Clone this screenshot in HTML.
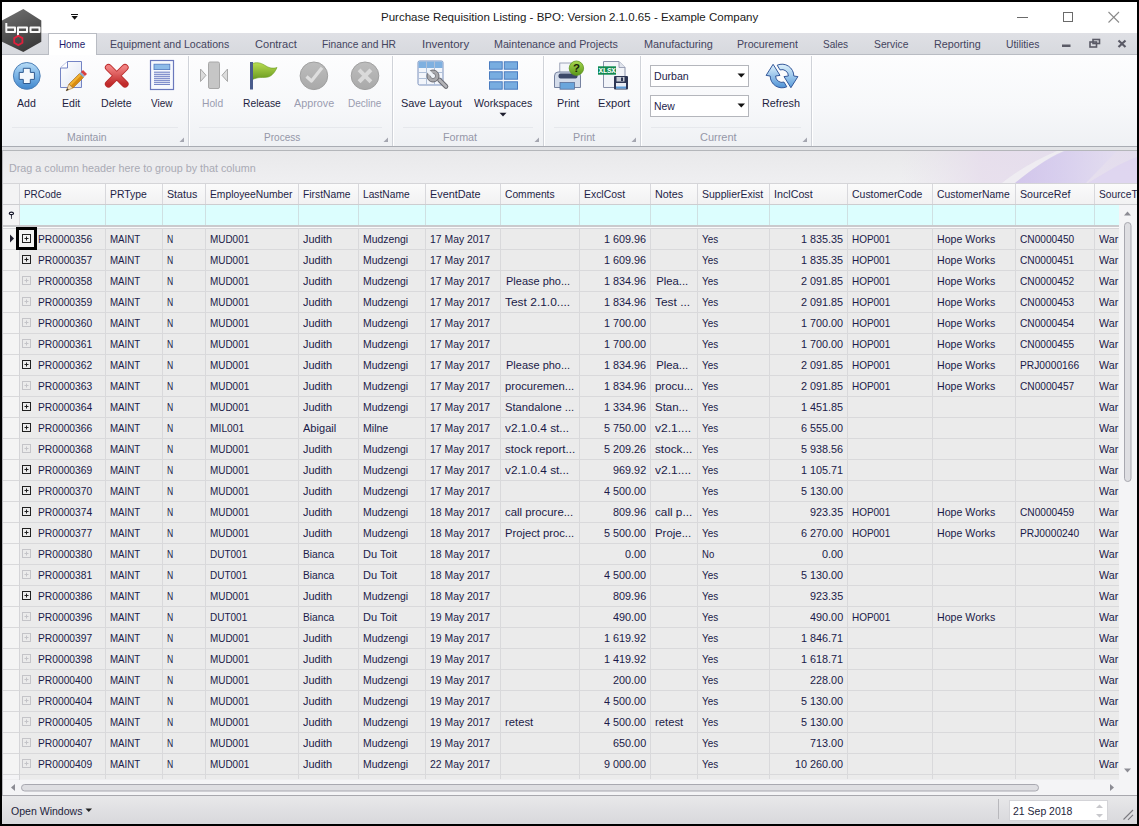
<!DOCTYPE html><html><head><meta charset="utf-8"><style>
*{margin:0;padding:0;box-sizing:border-box}
html,body{width:1139px;height:826px;overflow:hidden;background:#000}
body{position:relative;font-family:"Liberation Sans",sans-serif;}
.a{position:absolute}
.t{position:absolute;white-space:pre;transform-origin:0 0}
svg{position:absolute}
</style></head><body>
<div class="a" style="left:2px;top:2px;width:1135px;height:822px;background:#fff;"></div><div class="t" style="left:381.40px;top:12.32px;font-size:11.2px;line-height:11.2px;color:#1a1a1a;transform:scaleX(1.0301);">Purchase Requisition Listing - BPO: Version 2.1.0.65 - Example Company</div><svg style="left:1000px;top:2px" width="137" height="31">
<line x1="17" y1="15.5" x2="28" y2="15.5" stroke="#6a6a6a" stroke-width="1"/>
<rect x="63.5" y="10.5" width="9" height="9" fill="none" stroke="#6a6a6a" stroke-width="1"/>
<line x1="108.5" y1="10" x2="119" y2="20.5" stroke="#8a8a8a" stroke-width="1.1"/>
<line x1="119" y1="10" x2="108.5" y2="20.5" stroke="#8a8a8a" stroke-width="1.1"/>
</svg><svg style="left:68px;top:10px" width="14" height="12">
<rect x="3" y="4" width="7" height="1" fill="#111"/>
<path d="M3.5 6 L9.8 6 L6.65 9.8 Z" fill="#111"/>
</svg><div class="a" style="left:2px;top:33px;width:1135px;height:21px;background:linear-gradient(#dfe0e5,#d7d9de);"></div><div class="a" style="left:2px;top:54px;width:1135px;height:1px;background:#b9bcc3;"></div><div class="a" style="left:48px;top:33px;width:49px;height:22px;background:#fff;border:1px solid #b9bcc3;border-bottom:none"></div><div class="t" style="left:58.60px;top:39.39px;font-size:11px;line-height:11px;color:#1c1c6a;transform:scaleX(0.8963);">Home</div><div class="t" style="left:110.20px;top:39.39px;font-size:11px;line-height:11px;color:#44445e;transform:scaleX(0.9602);">Equipment and Locations</div><div class="t" style="left:254.50px;top:39.39px;font-size:11px;line-height:11px;color:#44445e;transform:scaleX(1.0050);">Contract</div><div class="t" style="left:321.60px;top:39.39px;font-size:11px;line-height:11px;color:#44445e;transform:scaleX(0.9305);">Finance and HR</div><div class="t" style="left:421.90px;top:39.39px;font-size:11px;line-height:11px;color:#44445e;transform:scaleX(1.0424);">Inventory</div><div class="t" style="left:494.40px;top:39.39px;font-size:11px;line-height:11px;color:#44445e;transform:scaleX(0.9734);">Maintenance and Projects</div><div class="t" style="left:643.60px;top:39.39px;font-size:11px;line-height:11px;color:#44445e;transform:scaleX(0.9878);">Manufacturing</div><div class="t" style="left:737.40px;top:39.39px;font-size:11px;line-height:11px;color:#44445e;transform:scaleX(0.9667);">Procurement</div><div class="t" style="left:823.40px;top:39.39px;font-size:11px;line-height:11px;color:#44445e;transform:scaleX(0.9117);">Sales</div><div class="t" style="left:873.80px;top:39.39px;font-size:11px;line-height:11px;color:#44445e;transform:scaleX(0.9376);">Service</div><div class="t" style="left:933.50px;top:39.39px;font-size:11px;line-height:11px;color:#44445e;transform:scaleX(0.9787);">Reporting</div><div class="t" style="left:1005.70px;top:39.39px;font-size:11px;line-height:11px;color:#44445e;transform:scaleX(0.9397);">Utilities</div><svg style="left:1055px;top:35px" width="80" height="18">
<rect x="7" y="9.5" width="8.5" height="2.5" fill="#5a5a66"/>
<rect x="35" y="7" width="6.5" height="5" fill="none" stroke="#5a5a66" stroke-width="1.6"/>
<rect x="38" y="4.5" width="6.5" height="4" fill="none" stroke="#5a5a66" stroke-width="1.6"/>
<path d="M63.5 5.5 L70.5 12 M70.5 5.5 L63.5 12" stroke="#5a5a66" stroke-width="2.2"/>
</svg><svg style="left:0;top:0" width="48" height="56">
<defs><linearGradient id="gHex" x1="0.2" y1="0" x2="0.6" y2="1"><stop offset="0" stop-color="#6e6e6e"/><stop offset="0.45" stop-color="#565656"/><stop offset="1" stop-color="#3a3a3a"/></linearGradient></defs>
<path d="M23.3 9 L41.3 20.4 L41.3 41.8 L23.3 51.9 L2 41.8 L2 20.4 Z" fill="url(#gHex)"/>
<g fill="none" stroke="#fafafa" stroke-width="2" stroke-linejoin="round">
<path d="M6.3 23 V32 H15 V27.5 H6.3"/>
<path d="M18 36 V27.5 H27 V32 H18"/>
<rect x="30.5" y="27.5" width="9" height="4.5"/>
</g>
<path d="M18.3 35.8 L22.4 38.1 L22.4 42.8 L18.3 45.1 L14.2 42.8 L14.2 38.1 Z" fill="none" stroke="#e0203c" stroke-width="1.8"/>
</svg><div class="a" style="left:2px;top:55px;width:1135px;height:91px;background:linear-gradient(#fdfdfe 0%,#f7f8fa 55%,#eff1f4 100%);"></div><div class="a" style="left:2px;top:146px;width:1135px;height:1px;background:#a9acb3;"></div><div class="a" style="left:188px;top:56px;width:1px;height:90px;background:#d0d3d9;"></div><div class="a" style="left:189px;top:56px;width:1px;height:90px;background:#ffffff;"></div><div class="a" style="left:392px;top:56px;width:1px;height:90px;background:#d0d3d9;"></div><div class="a" style="left:393px;top:56px;width:1px;height:90px;background:#ffffff;"></div><div class="a" style="left:543px;top:56px;width:1px;height:90px;background:#d0d3d9;"></div><div class="a" style="left:544px;top:56px;width:1px;height:90px;background:#ffffff;"></div><div class="a" style="left:640px;top:56px;width:1px;height:90px;background:#d0d3d9;"></div><div class="a" style="left:641px;top:56px;width:1px;height:90px;background:#ffffff;"></div><div class="a" style="left:811px;top:56px;width:1px;height:90px;background:#d0d3d9;"></div><div class="a" style="left:812px;top:56px;width:1px;height:90px;background:#ffffff;"></div><div class="a" style="left:12px;top:127px;width:166px;height:1px;background:#e6e8ec;"></div><div class="t" style="left:66.70px;top:131.79px;font-size:11px;line-height:11px;color:#9597a8;transform:scaleX(0.9521);">Maintain</div><svg style="left:179px;top:137px" width="6" height="6"><path d="M5 0.5 L5 5 L0.5 5 Z" fill="#a4a6b0"/></svg><div class="a" style="left:199px;top:127px;width:183px;height:1px;background:#e6e8ec;"></div><div class="t" style="left:263.90px;top:131.79px;font-size:11px;line-height:11px;color:#9597a8;transform:scaleX(0.9132);">Process</div><svg style="left:383px;top:137px" width="6" height="6"><path d="M5 0.5 L5 5 L0.5 5 Z" fill="#a4a6b0"/></svg><div class="a" style="left:403px;top:127px;width:130px;height:1px;background:#e6e8ec;"></div><div class="t" style="left:442.50px;top:131.79px;font-size:11px;line-height:11px;color:#9597a8;transform:scaleX(0.9787);">Format</div><svg style="left:534px;top:137px" width="6" height="6"><path d="M5 0.5 L5 5 L0.5 5 Z" fill="#a4a6b0"/></svg><div class="a" style="left:554px;top:127px;width:76px;height:1px;background:#e6e8ec;"></div><div class="t" style="left:572.70px;top:131.79px;font-size:11px;line-height:11px;color:#9597a8;transform:scaleX(0.9768);">Print</div><svg style="left:631px;top:137px" width="6" height="6"><path d="M5 0.5 L5 5 L0.5 5 Z" fill="#a4a6b0"/></svg><div class="a" style="left:651px;top:127px;width:150px;height:1px;background:#e6e8ec;"></div><div class="t" style="left:699.90px;top:131.79px;font-size:11px;line-height:11px;color:#9597a8;transform:scaleX(0.9976);">Current</div><svg style="left:802px;top:137px" width="6" height="6"><path d="M5 0.5 L5 5 L0.5 5 Z" fill="#a4a6b0"/></svg><div class="t" style="left:16.70px;top:97.69px;font-size:11px;line-height:11px;color:#1e1e40;transform:scaleX(0.9595);">Add</div><div class="t" style="left:62.20px;top:97.69px;font-size:11px;line-height:11px;color:#1e1e40;transform:scaleX(0.9595);">Edit</div><div class="t" style="left:100.60px;top:97.69px;font-size:11px;line-height:11px;color:#1e1e40;transform:scaleX(0.9650);">Delete</div><div class="t" style="left:150.60px;top:97.69px;font-size:11px;line-height:11px;color:#1e1e40;transform:scaleX(0.9095);">View</div><div class="t" style="left:202.10px;top:97.69px;font-size:11px;line-height:11px;color:#9a9cb0;transform:scaleX(0.9326);">Hold</div><div class="t" style="left:242.50px;top:97.69px;font-size:11px;line-height:11px;color:#1e1e40;transform:scaleX(0.9362);">Release</div><div class="t" style="left:293.80px;top:97.69px;font-size:11px;line-height:11px;color:#9a9cb0;transform:scaleX(0.9805);">Approve</div><div class="t" style="left:347.60px;top:97.69px;font-size:11px;line-height:11px;color:#9a9cb0;transform:scaleX(0.9104);">Decline</div><div class="t" style="left:401.30px;top:97.69px;font-size:11px;line-height:11px;color:#1e1e40;transform:scaleX(0.9932);">Save Layout</div><div class="t" style="left:474.30px;top:97.69px;font-size:11px;line-height:11px;color:#1e1e40;transform:scaleX(0.9647);">Workspaces</div><div class="t" style="left:557.40px;top:97.69px;font-size:11px;line-height:11px;color:#1e1e40;transform:scaleX(0.9901);">Print</div><div class="t" style="left:597.70px;top:97.69px;font-size:11px;line-height:11px;color:#1e1e40;transform:scaleX(1.0090);">Export</div><div class="t" style="left:762.40px;top:97.69px;font-size:11px;line-height:11px;color:#1e1e40;transform:scaleX(0.9862);">Refresh</div><svg style="left:0;top:0" width="1139" height="146">
<defs>
<linearGradient id="gAdd" x1="0" y1="0" x2="0" y2="1"><stop offset="0" stop-color="#b8dcf6"/><stop offset="0.5" stop-color="#79b3e6"/><stop offset="1" stop-color="#3f86cc"/></linearGradient>
<linearGradient id="gDel" x1="0" y1="0" x2="0" y2="1"><stop offset="0" stop-color="#f08080"/><stop offset="1" stop-color="#c02a2a"/></linearGradient>
<linearGradient id="gGray" x1="0" y1="0" x2="0" y2="1"><stop offset="0" stop-color="#bdbdbd"/><stop offset="1" stop-color="#a9a9a9"/></linearGradient>
<linearGradient id="gFlag" x1="0" y1="0" x2="0" y2="1"><stop offset="0" stop-color="#b8dc50"/><stop offset="1" stop-color="#6a9a20"/></linearGradient>
<linearGradient id="gRef" x1="0" y1="0" x2="0" y2="1"><stop offset="0" stop-color="#dff2fc"/><stop offset="1" stop-color="#5b9ddb"/></linearGradient>
<linearGradient id="gPage" x1="0" y1="0" x2="1" y2="1"><stop offset="0" stop-color="#ffffff"/><stop offset="1" stop-color="#dfe5f3"/></linearGradient>
</defs>
<!-- Add -->
<circle cx="26.8" cy="75.9" r="13.4" fill="url(#gAdd)" stroke="#4d7fb6" stroke-width="1"/>
<path d="M23.3 68.3 H30.3 V72.4 H34.4 V79.4 H30.3 V83.5 H23.3 V79.4 H19.2 V72.4 H23.3 Z" fill="#f4f8fc" stroke="#2e5a90" stroke-width="1" stroke-linejoin="round"/>
<!-- Edit page -->
<path d="M60.5 68 L67.5 61.5 H81.5 V87.5 H60.5 Z" fill="url(#gPage)" stroke="#7484c4" stroke-width="1"/>
<path d="M60.5 68 H67.5 V61.5" fill="#fff" stroke="#7484c4" stroke-width="1"/>
<!-- pencil -->
<g transform="translate(73,84) rotate(-45)">
<rect x="-3" y="-2.8" width="15" height="5.6" fill="#f0b030" stroke="#9a6010" stroke-width="0.6"/>
<rect x="-3" y="-0.2" width="15" height="2.8" fill="#d88a10"/>
<rect x="12" y="-2.8" width="2" height="5.6" fill="#8ab0d0"/>
<rect x="14" y="-2.8" width="3" height="5.6" fill="#d84040"/>
<path d="M-3 -2.8 L-9.5 0 L-3 2.8 Z" fill="#f4dcb0" stroke="#9a6010" stroke-width="0.5"/>
<path d="M-7 -1 L-10 0 L-7 1 Z" fill="#333"/>
</g>
<!-- Delete -->
<path d="M108.5 67.5 L125 84 M125 67.5 L108.5 84" stroke="#b82828" stroke-width="7.2" stroke-linecap="round"/>
<path d="M108.5 67.5 L125 84 M125 67.5 L108.5 84" stroke="url(#gDel)" stroke-width="5.4" stroke-linecap="round"/>
<!-- View -->
<rect x="150.5" y="60.5" width="23" height="29" fill="#f7f9fd" stroke="#6a78bc" stroke-width="1.2"/>
<rect x="154" y="64.2" width="15.8" height="5.4" fill="#8dbbe8" stroke="#4f78c0" stroke-width="0.8"/>
<g stroke="#6f80c4" stroke-width="1.1">
<line x1="154" y1="72.2" x2="170" y2="72.2"/><line x1="154" y1="74.3" x2="170" y2="74.3"/><line x1="154" y1="76.3" x2="170" y2="76.3"/><line x1="154" y1="78.3" x2="170" y2="78.3"/><line x1="154" y1="80.3" x2="170" y2="80.3"/><line x1="154" y1="82.3" x2="170" y2="82.3"/><line x1="154" y1="84.4" x2="170" y2="84.4"/>
</g>
<!-- Hold -->
<rect x="208.5" y="62" width="11" height="26.5" rx="1.5" fill="#c6c6c6" stroke="#a8a8a8" stroke-width="1"/>
<path d="M200.5 69 L206 75.3 L200.5 81.5 Z" fill="#dcdcdc" stroke="#a8a8a8" stroke-width="1"/>
<path d="M227.5 69 L222 75.3 L227.5 81.5 Z" fill="#dcdcdc" stroke="#a8a8a8" stroke-width="1"/>
<!-- Release flag -->
<path d="M252.5 63.5 C258 61.5 262 63.5 266 66 C270 68.5 274 68.5 277 67.5 C275 72 272 76 268 77 C263 78 259 76.5 252.5 79.5 Z" fill="url(#gFlag)" stroke="#6a9a20" stroke-width="0.6"/>
<rect x="250" y="62" width="3" height="27.5" fill="#4a5c8c"/>
<!-- Approve -->
<circle cx="313.9" cy="75.8" r="13.8" fill="url(#gGray)" stroke="#a0a0a0" stroke-width="1"/>
<path d="M306.5 76.5 L311.5 81 L322 67.8" fill="none" stroke="#dedede" stroke-width="3.2" stroke-linejoin="round"/>
<!-- Decline -->
<circle cx="365" cy="75.8" r="13.8" fill="url(#gGray)" stroke="#a0a0a0" stroke-width="1"/>
<path d="M360.5 71.3 L369.5 80.3 M369.5 71.3 L360.5 80.3" stroke="#dadada" stroke-width="4" stroke-linecap="square"/>
<!-- Save Layout -->
<rect x="418" y="61" width="25" height="24" rx="1.5" fill="#f2f5fb" stroke="#7a90bc" stroke-width="1"/>
<rect x="418.5" y="61.5" width="24" height="6.5" fill="#7fb0e0"/>
<g stroke="#b0c0d8" stroke-width="1"><line x1="426.5" y1="61.5" x2="426.5" y2="85"/><line x1="434.5" y1="61.5" x2="434.5" y2="85"/><line x1="418.5" y1="72.5" x2="443" y2="72.5"/><line x1="418.5" y1="78.5" x2="443" y2="78.5"/></g>
<path d="M439.5 80 L446 86.5" stroke="#6c6c72" stroke-width="4.6" stroke-linecap="round"/>
<path d="M439.5 80 L446 86.5" stroke="#b4b4b8" stroke-width="2.6" stroke-linecap="round"/>
<circle cx="433" cy="76" r="6" fill="#a8a8ac" stroke="#6c6c72" stroke-width="1"/>
<circle cx="433" cy="76" r="2.6" fill="#eef2f8" stroke="#6c6c72" stroke-width="0.8"/>
<path d="M428 71 L432.5 75.5" stroke="#eef2f8" stroke-width="3.2"/>
<!-- Workspaces -->
<g fill="#78ade0" stroke="#4a7cc0" stroke-width="1"><rect x="489.5" y="61.8" width="12.699999999999989" height="7.400000000000006"/><rect x="504.3" y="61.8" width="13.199999999999989" height="7.400000000000006"/><rect x="489.5" y="71.8" width="12.699999999999989" height="7.400000000000006"/><rect x="504.3" y="71.8" width="13.199999999999989" height="7.400000000000006"/><rect x="489.5" y="81.8" width="12.699999999999989" height="7.400000000000006"/><rect x="504.3" y="81.8" width="13.199999999999989" height="7.400000000000006"/></g>
<path d="M499.5 112.8 L506.5 112.8 L503 116.6 Z" fill="#1e1e2e"/>
<!-- Print -->
<rect x="559.8" y="63" width="11.5" height="12" fill="#f4f6fa" stroke="#8890a8" stroke-width="0.8"/>
<path d="M554.5 76 Q554.5 72 558 72 H577 Q580.5 72 580.5 76 V87.5 H554.5 Z" fill="#d4dcea" stroke="#7682a0" stroke-width="1"/>
<rect x="558.5" y="73.5" width="19" height="5" rx="2" fill="#3c4868"/>
<rect x="560" y="82.5" width="14.5" height="6.7" fill="#6aa6dc" stroke="#5a6f98" stroke-width="0.8"/>
<linearGradient id="gQ" x1="0" y1="0" x2="0" y2="1"><stop offset="0" stop-color="#a8d850"/><stop offset="1" stop-color="#5a9818"/></linearGradient><circle cx="576.4" cy="68.2" r="7.2" fill="url(#gQ)" stroke="#5e9420" stroke-width="0.8"/>
<text x="576.6" y="72.4" font-family="Liberation Sans" font-weight="bold" font-size="11.5" text-anchor="middle" fill="#1a2408">?</text>
<!-- Export -->
<path d="M603.5 61.5 H619 L625 67.5 V87.5 H603.5 Z" fill="#f2f4f8" stroke="#8a92aa" stroke-width="1"/>
<path d="M619 61.5 V67.5 H625" fill="#e0e4ec" stroke="#8a92aa" stroke-width="0.8"/>
<rect x="598" y="66.3" width="18" height="8.4" fill="#128a50"/>
<text x="607" y="73.4" font-family="Liberation Mono" font-weight="bold" font-size="7.6" text-anchor="middle" fill="#fff" letter-spacing="-0.3">XLSX</text>
<rect x="614" y="76" width="14" height="13.6" rx="1" fill="#2d3654"/>
<rect x="616.5" y="77" width="8" height="4.5" fill="#c8ccd4"/>
<rect x="621" y="77.5" width="2" height="3.5" fill="#2d3654"/>
<rect x="616" y="83" width="10" height="5.5" fill="#e8ecf4"/>
<rect x="616" y="86.5" width="10" height="2" fill="#5a9ad8"/>
<!-- Refresh -->
<linearGradient id="gRef2" x1="0" y1="1" x2="0" y2="0"><stop offset="0" stop-color="#e2f4fd"/><stop offset="1" stop-color="#4e92d6"/></linearGradient>
<path d="M777.2 65.2 A11.8 11.8 0 0 1 793.8 76 L797.9 76.6 L790.9 87.7 L784 76.6 L788.4 76 A6.4 6.4 0 0 0 780 69.9 Z" fill="url(#gRef)" stroke="#34589a" stroke-width="1" stroke-linejoin="round"/>
<path transform="rotate(180 782 76)" d="M777.2 65.2 A11.8 11.8 0 0 1 793.8 76 L797.9 76.6 L790.9 87.7 L784 76.6 L788.4 76 A6.4 6.4 0 0 0 780 69.9 Z" fill="url(#gRef2)" stroke="#34589a" stroke-width="1" stroke-linejoin="round"/>
</svg><div class="a" style="left:650px;top:65px;width:99px;height:22px;background:#fff;border:1px solid #b4b6bc"></div><div class="t" style="left:654.40px;top:70.79px;font-size:11px;line-height:11px;color:#1c1c4a;transform:scaleX(0.9614);">Durban</div><svg style="left:737px;top:73px" width="9" height="6"><path d="M0.5 0.5 H8 L4.25 4.5 Z" fill="#111"/></svg><div class="a" style="left:650px;top:95px;width:99px;height:22px;background:#fff;border:1px solid #b4b6bc"></div><div class="t" style="left:654.40px;top:100.59px;font-size:11px;line-height:11px;color:#1c1c4a;transform:scaleX(0.9455);">New</div><svg style="left:737px;top:103px" width="9" height="6"><path d="M0.5 0.5 H8 L4.25 4.5 Z" fill="#111"/></svg><div class="a" style="left:2px;top:147px;width:1135px;height:3px;background:#e2e3e6;"></div><div class="a" style="left:2px;top:150px;width:1135px;height:1px;background:#b4b6ba;"></div><div class="a" style="left:2px;top:151px;width:1135px;height:32px;background:linear-gradient(#e9e9eb,#efeff1);"></div><svg style="left:960px;top:151px" width="177" height="32" overflow="visible">
<defs>
<linearGradient id="sw0" x1="0" y1="0" x2="1" y2="0"><stop offset="0" stop-color="#e8e2ec" stop-opacity="0"/><stop offset="0.35" stop-color="#e6dcec" stop-opacity="0.8"/><stop offset="1" stop-color="#e2daee" stop-opacity="0.8"/></linearGradient>
<linearGradient id="sw1" x1="0" y1="0" x2="1" y2="0"><stop offset="0" stop-color="#c9bbea"/><stop offset="0.45" stop-color="#d2c8ee"/><stop offset="1" stop-color="#e2dcf0"/></linearGradient>
</defs>
<rect x="-60" y="0" width="237" height="32" fill="url(#sw0)"/>
<path d="M42 32 C57 20 77 8 97 0 L106 0 C86 8 70 20 55 32 Z" fill="#f0eef2" opacity="0.85"/>
<path d="M55 32 C70 20 85 8 104 0 L157 0 L126 32 Z" fill="url(#sw1)" opacity="0.7"/>
<path d="M128 32 C145 22 160 12 177 6 L177 32 Z" fill="#ddd3f0" opacity="0.8"/>
</svg><div class="t" style="left:8.80px;top:162.69px;font-size:11px;line-height:11px;color:#a9aab4;transform:scaleX(0.9793);">Drag a column header here to group by that column</div><div class="a" style="left:2px;top:183px;width:1135px;height:22px;background:linear-gradient(#fbfbfb,#f1f1f2);"></div><div class="a" style="left:2px;top:183px;width:1135px;height:1px;background:#d5d5d8;"></div><div class="a" style="left:2px;top:204px;width:1135px;height:1px;background:#cdcdd0;"></div><div class="a" style="left:2px;top:184px;width:17px;height:20px;background:#f3f3f4;"></div><div class="a" style="left:19px;top:184px;width:1px;height:20px;background:#d8d8dc;"></div><div class="a" style="left:0;top:0;width:1137px;height:826px;overflow:hidden"><div class="a" style="left:105px;top:184px;width:1px;height:20px;background:#d8d8dc;"></div><div class="t" style="left:23.60px;top:189.19px;font-size:11px;line-height:11px;color:#1e1e46;transform:scaleX(0.8992);">PRCode</div><div class="a" style="left:162px;top:184px;width:1px;height:20px;background:#d8d8dc;"></div><div class="t" style="left:109.60px;top:189.19px;font-size:11px;line-height:11px;color:#1e1e46;transform:scaleX(0.9477);">PRType</div><div class="a" style="left:205px;top:184px;width:1px;height:20px;background:#d8d8dc;"></div><div class="t" style="left:166.60px;top:189.19px;font-size:11px;line-height:11px;color:#1e1e46;transform:scaleX(0.9706);">Status</div><div class="a" style="left:298px;top:184px;width:1px;height:20px;background:#d8d8dc;"></div><div class="t" style="left:209.60px;top:189.19px;font-size:11px;line-height:11px;color:#1e1e46;transform:scaleX(0.9357);">EmployeeNumber</div><div class="a" style="left:358px;top:184px;width:1px;height:20px;background:#d8d8dc;"></div><div class="t" style="left:302.60px;top:189.19px;font-size:11px;line-height:11px;color:#1e1e46;transform:scaleX(0.9346);">FirstName</div><div class="a" style="left:425px;top:184px;width:1px;height:20px;background:#d8d8dc;"></div><div class="t" style="left:362.60px;top:189.19px;font-size:11px;line-height:11px;color:#1e1e46;transform:scaleX(0.9291);">LastName</div><div class="a" style="left:500px;top:184px;width:1px;height:20px;background:#d8d8dc;"></div><div class="t" style="left:429.60px;top:189.19px;font-size:11px;line-height:11px;color:#1e1e46;transform:scaleX(0.9843);">EventDate</div><div class="a" style="left:579px;top:184px;width:1px;height:20px;background:#d8d8dc;"></div><div class="t" style="left:504.60px;top:189.19px;font-size:11px;line-height:11px;color:#1e1e46;transform:scaleX(0.9325);">Comments</div><div class="a" style="left:650px;top:184px;width:1px;height:20px;background:#d8d8dc;"></div><div class="t" style="left:583.60px;top:189.19px;font-size:11px;line-height:11px;color:#1e1e46;transform:scaleX(0.9469);">ExclCost</div><div class="a" style="left:697px;top:184px;width:1px;height:20px;background:#d8d8dc;"></div><div class="t" style="left:654.60px;top:189.19px;font-size:11px;line-height:11px;color:#1e1e46;transform:scaleX(0.9809);">Notes</div><div class="a" style="left:769px;top:184px;width:1px;height:20px;background:#d8d8dc;"></div><div class="t" style="left:701.60px;top:189.19px;font-size:11px;line-height:11px;color:#1e1e46;transform:scaleX(0.9545);">SupplierExist</div><div class="a" style="left:847px;top:184px;width:1px;height:20px;background:#d8d8dc;"></div><div class="t" style="left:773.60px;top:189.19px;font-size:11px;line-height:11px;color:#1e1e46;transform:scaleX(0.9736);">InclCost</div><div class="a" style="left:932px;top:184px;width:1px;height:20px;background:#d8d8dc;"></div><div class="t" style="left:851.60px;top:189.19px;font-size:11px;line-height:11px;color:#1e1e46;transform:scaleX(0.9514);">CustomerCode</div><div class="a" style="left:1015px;top:184px;width:1px;height:20px;background:#d8d8dc;"></div><div class="t" style="left:936.60px;top:189.19px;font-size:11px;line-height:11px;color:#1e1e46;transform:scaleX(0.9438);">CustomerName</div><div class="a" style="left:1094px;top:184px;width:1px;height:20px;background:#d8d8dc;"></div><div class="t" style="left:1019.60px;top:189.19px;font-size:11px;line-height:11px;color:#1e1e46;transform:scaleX(0.9692);">SourceRef</div><div class="a" style="left:1200px;top:184px;width:1px;height:20px;background:#d8d8dc;"></div><div class="t" style="left:1098.60px;top:189.19px;font-size:11px;line-height:11px;color:#1e1e46;transform:scaleX(0.9300);">SourceType</div></div><div class="a" style="left:2px;top:205px;width:1117px;height:20px;background:#dcfefe;"></div><div class="a" style="left:2px;top:205px;width:17px;height:20px;background:#f3f3f4;"></div><div class="a" style="left:105px;top:205px;width:1px;height:20px;background:#cfe0e2;"></div><div class="a" style="left:162px;top:205px;width:1px;height:20px;background:#cfe0e2;"></div><div class="a" style="left:205px;top:205px;width:1px;height:20px;background:#cfe0e2;"></div><div class="a" style="left:298px;top:205px;width:1px;height:20px;background:#cfe0e2;"></div><div class="a" style="left:358px;top:205px;width:1px;height:20px;background:#cfe0e2;"></div><div class="a" style="left:425px;top:205px;width:1px;height:20px;background:#cfe0e2;"></div><div class="a" style="left:500px;top:205px;width:1px;height:20px;background:#cfe0e2;"></div><div class="a" style="left:579px;top:205px;width:1px;height:20px;background:#cfe0e2;"></div><div class="a" style="left:650px;top:205px;width:1px;height:20px;background:#cfe0e2;"></div><div class="a" style="left:697px;top:205px;width:1px;height:20px;background:#cfe0e2;"></div><div class="a" style="left:769px;top:205px;width:1px;height:20px;background:#cfe0e2;"></div><div class="a" style="left:847px;top:205px;width:1px;height:20px;background:#cfe0e2;"></div><div class="a" style="left:932px;top:205px;width:1px;height:20px;background:#cfe0e2;"></div><div class="a" style="left:1015px;top:205px;width:1px;height:20px;background:#cfe0e2;"></div><div class="a" style="left:1094px;top:205px;width:1px;height:20px;background:#cfe0e2;"></div><div class="a" style="left:19px;top:205px;width:1px;height:20px;background:#d8d8dc;"></div><svg style="left:6px;top:209px" width="10" height="12"><ellipse cx="5.4" cy="4.4" rx="2.1" ry="1.3" fill="#fff" stroke="#141428" stroke-width="1.2"/><path d="M4.9 5.6 H5.9 L5.7 10 H5.1 Z" fill="#141428"/></svg><div class="a" style="left:2px;top:228px;width:1117px;height:552px;background:#f4f4f6;"></div><div class="a" style="left:2px;top:779px;width:1135px;height:1px;background:#eeeef0;"></div><div class="a" style="left:20px;top:228px;width:1099px;height:551px;background:#ebebeb;"></div><div class="a" style="left:2px;top:228px;width:17px;height:547px;background:#f4f4f4;"></div><div class="a" style="left:2px;top:225px;width:1117px;height:2px;background:#cacacd;"></div><div class="a" style="left:2px;top:227px;width:1117px;height:1px;background:#fafafa;"></div><div class="a" style="left:2px;top:228px;width:1117px;height:1px;background:#d6d6da;"></div><div class="a" style="left:2px;top:249px;width:1117px;height:1px;background:#d9d9db;"></div><div class="a" style="left:2px;top:270px;width:1117px;height:1px;background:#d9d9db;"></div><div class="a" style="left:2px;top:291px;width:1117px;height:1px;background:#d9d9db;"></div><div class="a" style="left:2px;top:312px;width:1117px;height:1px;background:#d9d9db;"></div><div class="a" style="left:2px;top:333px;width:1117px;height:1px;background:#d9d9db;"></div><div class="a" style="left:2px;top:354px;width:1117px;height:1px;background:#d9d9db;"></div><div class="a" style="left:2px;top:375px;width:1117px;height:1px;background:#d9d9db;"></div><div class="a" style="left:2px;top:396px;width:1117px;height:1px;background:#d9d9db;"></div><div class="a" style="left:2px;top:417px;width:1117px;height:1px;background:#d9d9db;"></div><div class="a" style="left:2px;top:438px;width:1117px;height:1px;background:#d9d9db;"></div><div class="a" style="left:2px;top:459px;width:1117px;height:1px;background:#d9d9db;"></div><div class="a" style="left:2px;top:480px;width:1117px;height:1px;background:#d9d9db;"></div><div class="a" style="left:2px;top:501px;width:1117px;height:1px;background:#d9d9db;"></div><div class="a" style="left:2px;top:522px;width:1117px;height:1px;background:#d9d9db;"></div><div class="a" style="left:2px;top:543px;width:1117px;height:1px;background:#d9d9db;"></div><div class="a" style="left:2px;top:564px;width:1117px;height:1px;background:#d9d9db;"></div><div class="a" style="left:2px;top:585px;width:1117px;height:1px;background:#d9d9db;"></div><div class="a" style="left:2px;top:606px;width:1117px;height:1px;background:#d9d9db;"></div><div class="a" style="left:2px;top:627px;width:1117px;height:1px;background:#d9d9db;"></div><div class="a" style="left:2px;top:648px;width:1117px;height:1px;background:#d9d9db;"></div><div class="a" style="left:2px;top:669px;width:1117px;height:1px;background:#d9d9db;"></div><div class="a" style="left:2px;top:690px;width:1117px;height:1px;background:#d9d9db;"></div><div class="a" style="left:2px;top:711px;width:1117px;height:1px;background:#d9d9db;"></div><div class="a" style="left:2px;top:732px;width:1117px;height:1px;background:#d9d9db;"></div><div class="a" style="left:2px;top:753px;width:1117px;height:1px;background:#d9d9db;"></div><div class="a" style="left:2px;top:774px;width:1117px;height:1px;background:#d9d9db;"></div><div class="a" style="left:105px;top:228px;width:1px;height:551px;background:#d9d9db;"></div><div class="a" style="left:162px;top:228px;width:1px;height:551px;background:#d9d9db;"></div><div class="a" style="left:205px;top:228px;width:1px;height:551px;background:#d9d9db;"></div><div class="a" style="left:298px;top:228px;width:1px;height:551px;background:#d9d9db;"></div><div class="a" style="left:358px;top:228px;width:1px;height:551px;background:#d9d9db;"></div><div class="a" style="left:425px;top:228px;width:1px;height:551px;background:#d9d9db;"></div><div class="a" style="left:500px;top:228px;width:1px;height:551px;background:#d9d9db;"></div><div class="a" style="left:579px;top:228px;width:1px;height:551px;background:#d9d9db;"></div><div class="a" style="left:650px;top:228px;width:1px;height:551px;background:#d9d9db;"></div><div class="a" style="left:697px;top:228px;width:1px;height:551px;background:#d9d9db;"></div><div class="a" style="left:769px;top:228px;width:1px;height:551px;background:#d9d9db;"></div><div class="a" style="left:847px;top:228px;width:1px;height:551px;background:#d9d9db;"></div><div class="a" style="left:932px;top:228px;width:1px;height:551px;background:#d9d9db;"></div><div class="a" style="left:1015px;top:228px;width:1px;height:551px;background:#d9d9db;"></div><div class="a" style="left:1094px;top:228px;width:1px;height:551px;background:#d9d9db;"></div><div class="a" style="left:19px;top:228px;width:1px;height:552px;background:#d5d5d8;"></div><div class="a" style="left:19px;top:228px;width:17px;height:21px;background:#f2f2f2;"></div><div class="a" style="left:0;top:0;width:1119px;height:826px;overflow:hidden"><div class="t" style="left:37.70px;top:233.89px;font-size:11px;line-height:11px;color:#1a1a48;transform:scaleX(0.9320);">PR0000356</div><div class="t" style="left:109.60px;top:233.89px;font-size:11px;line-height:11px;color:#1a1a48;transform:scaleX(0.8826);">MAINT</div><div class="t" style="left:166.60px;top:233.89px;font-size:11px;line-height:11px;color:#1a1a48;transform:scaleX(0.7811);">N</div><div class="t" style="left:209.60px;top:233.89px;font-size:11px;line-height:11px;color:#1a1a48;transform:scaleX(0.9031);">MUD001</div><div class="t" style="left:302.60px;top:233.89px;font-size:11px;line-height:11px;color:#1a1a48;transform:scaleX(0.9940);">Judith</div><div class="t" style="left:362.60px;top:233.89px;font-size:11px;line-height:11px;color:#1a1a48;transform:scaleX(0.9472);">Mudzengi</div><div class="t" style="left:429.60px;top:233.89px;font-size:11px;line-height:11px;color:#1a1a48;transform:scaleX(0.9457);">17 May 2017</div><div class="t" style="left:604.20px;top:233.89px;font-size:11px;line-height:11px;color:#1a1a48;transform:scaleX(0.9843);">1 609.96</div><div class="t" style="left:701.60px;top:233.89px;font-size:11px;line-height:11px;color:#1a1a48;transform:scaleX(0.9023);">Yes</div><div class="t" style="left:801.20px;top:233.89px;font-size:11px;line-height:11px;color:#1a1a48;transform:scaleX(0.9843);">1 835.35</div><div class="t" style="left:851.60px;top:233.89px;font-size:11px;line-height:11px;color:#1a1a48;transform:scaleX(0.9048);">HOP001</div><div class="t" style="left:936.60px;top:233.89px;font-size:11px;line-height:11px;color:#1a1a48;transform:scaleX(0.9647);">Hope Works</div><div class="t" style="left:1019.60px;top:233.89px;font-size:11px;line-height:11px;color:#1a1a48;transform:scaleX(0.9226);">CN0000450</div><div class="t" style="left:1098.60px;top:233.89px;font-size:11px;line-height:11px;color:#1a1a48;transform:scaleX(0.9722);">War</div><svg style="left:22px;top:234px" width="10" height="10"><rect x="0.5" y="0.5" width="8" height="8" fill="none" stroke="#202020"/><path d="M2.5 4.5 H6.5 M4.5 2.5 V6.5" stroke="#202020"/></svg><div class="t" style="left:37.70px;top:254.89px;font-size:11px;line-height:11px;color:#1a1a48;transform:scaleX(0.9320);">PR0000357</div><div class="t" style="left:109.60px;top:254.89px;font-size:11px;line-height:11px;color:#1a1a48;transform:scaleX(0.8826);">MAINT</div><div class="t" style="left:166.60px;top:254.89px;font-size:11px;line-height:11px;color:#1a1a48;transform:scaleX(0.7811);">N</div><div class="t" style="left:209.60px;top:254.89px;font-size:11px;line-height:11px;color:#1a1a48;transform:scaleX(0.9031);">MUD001</div><div class="t" style="left:302.60px;top:254.89px;font-size:11px;line-height:11px;color:#1a1a48;transform:scaleX(0.9940);">Judith</div><div class="t" style="left:362.60px;top:254.89px;font-size:11px;line-height:11px;color:#1a1a48;transform:scaleX(0.9472);">Mudzengi</div><div class="t" style="left:429.60px;top:254.89px;font-size:11px;line-height:11px;color:#1a1a48;transform:scaleX(0.9457);">17 May 2017</div><div class="t" style="left:604.20px;top:254.89px;font-size:11px;line-height:11px;color:#1a1a48;transform:scaleX(0.9843);">1 609.96</div><div class="t" style="left:701.60px;top:254.89px;font-size:11px;line-height:11px;color:#1a1a48;transform:scaleX(0.9023);">Yes</div><div class="t" style="left:801.20px;top:254.89px;font-size:11px;line-height:11px;color:#1a1a48;transform:scaleX(0.9843);">1 835.35</div><div class="t" style="left:851.60px;top:254.89px;font-size:11px;line-height:11px;color:#1a1a48;transform:scaleX(0.9048);">HOP001</div><div class="t" style="left:936.60px;top:254.89px;font-size:11px;line-height:11px;color:#1a1a48;transform:scaleX(0.9647);">Hope Works</div><div class="t" style="left:1019.60px;top:254.89px;font-size:11px;line-height:11px;color:#1a1a48;transform:scaleX(0.9226);">CN0000451</div><div class="t" style="left:1098.60px;top:254.89px;font-size:11px;line-height:11px;color:#1a1a48;transform:scaleX(0.9722);">War</div><svg style="left:22px;top:255px" width="10" height="10"><rect x="0.5" y="0.5" width="8" height="8" fill="none" stroke="#202020"/><path d="M2.5 4.5 H6.5 M4.5 2.5 V6.5" stroke="#202020"/></svg><div class="t" style="left:37.70px;top:275.89px;font-size:11px;line-height:11px;color:#1a1a48;transform:scaleX(0.9320);">PR0000358</div><div class="t" style="left:109.60px;top:275.89px;font-size:11px;line-height:11px;color:#1a1a48;transform:scaleX(0.8826);">MAINT</div><div class="t" style="left:166.60px;top:275.89px;font-size:11px;line-height:11px;color:#1a1a48;transform:scaleX(0.7811);">N</div><div class="t" style="left:209.60px;top:275.89px;font-size:11px;line-height:11px;color:#1a1a48;transform:scaleX(0.9031);">MUD001</div><div class="t" style="left:302.60px;top:275.89px;font-size:11px;line-height:11px;color:#1a1a48;transform:scaleX(0.9940);">Judith</div><div class="t" style="left:362.60px;top:275.89px;font-size:11px;line-height:11px;color:#1a1a48;transform:scaleX(0.9472);">Mudzengi</div><div class="t" style="left:429.60px;top:275.89px;font-size:11px;line-height:11px;color:#1a1a48;transform:scaleX(0.9457);">17 May 2017</div><div class="t" style="left:503.10px;top:275.89px;font-size:11px;line-height:11px;color:#1a1a48;transform:scaleX(0.9979);"> Please pho...</div><div class="t" style="left:604.20px;top:275.89px;font-size:11px;line-height:11px;color:#1a1a48;transform:scaleX(0.9843);">1 834.96</div><div class="t" style="left:653.10px;top:275.89px;font-size:11px;line-height:11px;color:#1a1a48;transform:scaleX(1.0268);"> Plea...</div><div class="t" style="left:701.60px;top:275.89px;font-size:11px;line-height:11px;color:#1a1a48;transform:scaleX(0.9023);">Yes</div><div class="t" style="left:801.20px;top:275.89px;font-size:11px;line-height:11px;color:#1a1a48;transform:scaleX(0.9843);">2 091.85</div><div class="t" style="left:851.60px;top:275.89px;font-size:11px;line-height:11px;color:#1a1a48;transform:scaleX(0.9048);">HOP001</div><div class="t" style="left:936.60px;top:275.89px;font-size:11px;line-height:11px;color:#1a1a48;transform:scaleX(0.9647);">Hope Works</div><div class="t" style="left:1019.60px;top:275.89px;font-size:11px;line-height:11px;color:#1a1a48;transform:scaleX(0.9226);">CN0000452</div><div class="t" style="left:1098.60px;top:275.89px;font-size:11px;line-height:11px;color:#1a1a48;transform:scaleX(0.9722);">War</div><svg style="left:22px;top:276px" width="10" height="10"><rect x="0.5" y="0.5" width="8" height="8" fill="none" stroke="#c4c4c8"/><path d="M2.5 4.5 H6.5 M4.5 2.5 V6.5" stroke="#c4c4c8"/></svg><div class="t" style="left:37.70px;top:296.89px;font-size:11px;line-height:11px;color:#1a1a48;transform:scaleX(0.9320);">PR0000359</div><div class="t" style="left:109.60px;top:296.89px;font-size:11px;line-height:11px;color:#1a1a48;transform:scaleX(0.8826);">MAINT</div><div class="t" style="left:166.60px;top:296.89px;font-size:11px;line-height:11px;color:#1a1a48;transform:scaleX(0.7811);">N</div><div class="t" style="left:209.60px;top:296.89px;font-size:11px;line-height:11px;color:#1a1a48;transform:scaleX(0.9031);">MUD001</div><div class="t" style="left:302.60px;top:296.89px;font-size:11px;line-height:11px;color:#1a1a48;transform:scaleX(0.9940);">Judith</div><div class="t" style="left:362.60px;top:296.89px;font-size:11px;line-height:11px;color:#1a1a48;transform:scaleX(0.9472);">Mudzengi</div><div class="t" style="left:429.60px;top:296.89px;font-size:11px;line-height:11px;color:#1a1a48;transform:scaleX(0.9457);">17 May 2017</div><div class="t" style="left:504.60px;top:296.89px;font-size:11px;line-height:11px;color:#1a1a48;transform:scaleX(1.0867);">Test 2.1.0....</div><div class="t" style="left:604.20px;top:296.89px;font-size:11px;line-height:11px;color:#1a1a48;transform:scaleX(0.9843);">1 834.96</div><div class="t" style="left:654.60px;top:296.89px;font-size:11px;line-height:11px;color:#1a1a48;transform:scaleX(1.0852);">Test ...</div><div class="t" style="left:701.60px;top:296.89px;font-size:11px;line-height:11px;color:#1a1a48;transform:scaleX(0.9023);">Yes</div><div class="t" style="left:801.20px;top:296.89px;font-size:11px;line-height:11px;color:#1a1a48;transform:scaleX(0.9843);">2 091.85</div><div class="t" style="left:851.60px;top:296.89px;font-size:11px;line-height:11px;color:#1a1a48;transform:scaleX(0.9048);">HOP001</div><div class="t" style="left:936.60px;top:296.89px;font-size:11px;line-height:11px;color:#1a1a48;transform:scaleX(0.9647);">Hope Works</div><div class="t" style="left:1019.60px;top:296.89px;font-size:11px;line-height:11px;color:#1a1a48;transform:scaleX(0.9226);">CN0000453</div><div class="t" style="left:1098.60px;top:296.89px;font-size:11px;line-height:11px;color:#1a1a48;transform:scaleX(0.9722);">War</div><svg style="left:22px;top:297px" width="10" height="10"><rect x="0.5" y="0.5" width="8" height="8" fill="none" stroke="#c4c4c8"/><path d="M2.5 4.5 H6.5 M4.5 2.5 V6.5" stroke="#c4c4c8"/></svg><div class="t" style="left:37.70px;top:317.89px;font-size:11px;line-height:11px;color:#1a1a48;transform:scaleX(0.9320);">PR0000360</div><div class="t" style="left:109.60px;top:317.89px;font-size:11px;line-height:11px;color:#1a1a48;transform:scaleX(0.8826);">MAINT</div><div class="t" style="left:166.60px;top:317.89px;font-size:11px;line-height:11px;color:#1a1a48;transform:scaleX(0.7811);">N</div><div class="t" style="left:209.60px;top:317.89px;font-size:11px;line-height:11px;color:#1a1a48;transform:scaleX(0.9031);">MUD001</div><div class="t" style="left:302.60px;top:317.89px;font-size:11px;line-height:11px;color:#1a1a48;transform:scaleX(0.9940);">Judith</div><div class="t" style="left:362.60px;top:317.89px;font-size:11px;line-height:11px;color:#1a1a48;transform:scaleX(0.9472);">Mudzengi</div><div class="t" style="left:429.60px;top:317.89px;font-size:11px;line-height:11px;color:#1a1a48;transform:scaleX(0.9457);">17 May 2017</div><div class="t" style="left:604.20px;top:317.89px;font-size:11px;line-height:11px;color:#1a1a48;transform:scaleX(0.9843);">1 700.00</div><div class="t" style="left:701.60px;top:317.89px;font-size:11px;line-height:11px;color:#1a1a48;transform:scaleX(0.9023);">Yes</div><div class="t" style="left:801.20px;top:317.89px;font-size:11px;line-height:11px;color:#1a1a48;transform:scaleX(0.9843);">1 700.00</div><div class="t" style="left:851.60px;top:317.89px;font-size:11px;line-height:11px;color:#1a1a48;transform:scaleX(0.9048);">HOP001</div><div class="t" style="left:936.60px;top:317.89px;font-size:11px;line-height:11px;color:#1a1a48;transform:scaleX(0.9647);">Hope Works</div><div class="t" style="left:1019.60px;top:317.89px;font-size:11px;line-height:11px;color:#1a1a48;transform:scaleX(0.9226);">CN0000454</div><div class="t" style="left:1098.60px;top:317.89px;font-size:11px;line-height:11px;color:#1a1a48;transform:scaleX(0.9722);">War</div><svg style="left:22px;top:318px" width="10" height="10"><rect x="0.5" y="0.5" width="8" height="8" fill="none" stroke="#c4c4c8"/><path d="M2.5 4.5 H6.5 M4.5 2.5 V6.5" stroke="#c4c4c8"/></svg><div class="t" style="left:37.70px;top:338.89px;font-size:11px;line-height:11px;color:#1a1a48;transform:scaleX(0.9320);">PR0000361</div><div class="t" style="left:109.60px;top:338.89px;font-size:11px;line-height:11px;color:#1a1a48;transform:scaleX(0.8826);">MAINT</div><div class="t" style="left:166.60px;top:338.89px;font-size:11px;line-height:11px;color:#1a1a48;transform:scaleX(0.7811);">N</div><div class="t" style="left:209.60px;top:338.89px;font-size:11px;line-height:11px;color:#1a1a48;transform:scaleX(0.9031);">MUD001</div><div class="t" style="left:302.60px;top:338.89px;font-size:11px;line-height:11px;color:#1a1a48;transform:scaleX(0.9940);">Judith</div><div class="t" style="left:362.60px;top:338.89px;font-size:11px;line-height:11px;color:#1a1a48;transform:scaleX(0.9472);">Mudzengi</div><div class="t" style="left:429.60px;top:338.89px;font-size:11px;line-height:11px;color:#1a1a48;transform:scaleX(0.9457);">17 May 2017</div><div class="t" style="left:604.20px;top:338.89px;font-size:11px;line-height:11px;color:#1a1a48;transform:scaleX(0.9843);">1 700.00</div><div class="t" style="left:701.60px;top:338.89px;font-size:11px;line-height:11px;color:#1a1a48;transform:scaleX(0.9023);">Yes</div><div class="t" style="left:801.20px;top:338.89px;font-size:11px;line-height:11px;color:#1a1a48;transform:scaleX(0.9843);">1 700.00</div><div class="t" style="left:851.60px;top:338.89px;font-size:11px;line-height:11px;color:#1a1a48;transform:scaleX(0.9048);">HOP001</div><div class="t" style="left:936.60px;top:338.89px;font-size:11px;line-height:11px;color:#1a1a48;transform:scaleX(0.9647);">Hope Works</div><div class="t" style="left:1019.60px;top:338.89px;font-size:11px;line-height:11px;color:#1a1a48;transform:scaleX(0.9226);">CN0000455</div><div class="t" style="left:1098.60px;top:338.89px;font-size:11px;line-height:11px;color:#1a1a48;transform:scaleX(0.9722);">War</div><svg style="left:22px;top:339px" width="10" height="10"><rect x="0.5" y="0.5" width="8" height="8" fill="none" stroke="#c4c4c8"/><path d="M2.5 4.5 H6.5 M4.5 2.5 V6.5" stroke="#c4c4c8"/></svg><div class="t" style="left:37.70px;top:359.89px;font-size:11px;line-height:11px;color:#1a1a48;transform:scaleX(0.9320);">PR0000362</div><div class="t" style="left:109.60px;top:359.89px;font-size:11px;line-height:11px;color:#1a1a48;transform:scaleX(0.8826);">MAINT</div><div class="t" style="left:166.60px;top:359.89px;font-size:11px;line-height:11px;color:#1a1a48;transform:scaleX(0.7811);">N</div><div class="t" style="left:209.60px;top:359.89px;font-size:11px;line-height:11px;color:#1a1a48;transform:scaleX(0.9031);">MUD001</div><div class="t" style="left:302.60px;top:359.89px;font-size:11px;line-height:11px;color:#1a1a48;transform:scaleX(0.9940);">Judith</div><div class="t" style="left:362.60px;top:359.89px;font-size:11px;line-height:11px;color:#1a1a48;transform:scaleX(0.9472);">Mudzengi</div><div class="t" style="left:429.60px;top:359.89px;font-size:11px;line-height:11px;color:#1a1a48;transform:scaleX(0.9457);">17 May 2017</div><div class="t" style="left:503.10px;top:359.89px;font-size:11px;line-height:11px;color:#1a1a48;transform:scaleX(0.9979);"> Please pho...</div><div class="t" style="left:604.20px;top:359.89px;font-size:11px;line-height:11px;color:#1a1a48;transform:scaleX(0.9843);">1 834.96</div><div class="t" style="left:653.10px;top:359.89px;font-size:11px;line-height:11px;color:#1a1a48;transform:scaleX(1.0268);"> Plea...</div><div class="t" style="left:701.60px;top:359.89px;font-size:11px;line-height:11px;color:#1a1a48;transform:scaleX(0.9023);">Yes</div><div class="t" style="left:801.20px;top:359.89px;font-size:11px;line-height:11px;color:#1a1a48;transform:scaleX(0.9843);">2 091.85</div><div class="t" style="left:851.60px;top:359.89px;font-size:11px;line-height:11px;color:#1a1a48;transform:scaleX(0.9048);">HOP001</div><div class="t" style="left:936.60px;top:359.89px;font-size:11px;line-height:11px;color:#1a1a48;transform:scaleX(0.9647);">Hope Works</div><div class="t" style="left:1019.60px;top:359.89px;font-size:11px;line-height:11px;color:#1a1a48;transform:scaleX(0.9300);">PRJ0000166</div><div class="t" style="left:1098.60px;top:359.89px;font-size:11px;line-height:11px;color:#1a1a48;transform:scaleX(0.9722);">War</div><svg style="left:22px;top:360px" width="10" height="10"><rect x="0.5" y="0.5" width="8" height="8" fill="none" stroke="#202020"/><path d="M2.5 4.5 H6.5 M4.5 2.5 V6.5" stroke="#202020"/></svg><div class="t" style="left:37.70px;top:380.89px;font-size:11px;line-height:11px;color:#1a1a48;transform:scaleX(0.9320);">PR0000363</div><div class="t" style="left:109.60px;top:380.89px;font-size:11px;line-height:11px;color:#1a1a48;transform:scaleX(0.8826);">MAINT</div><div class="t" style="left:166.60px;top:380.89px;font-size:11px;line-height:11px;color:#1a1a48;transform:scaleX(0.7811);">N</div><div class="t" style="left:209.60px;top:380.89px;font-size:11px;line-height:11px;color:#1a1a48;transform:scaleX(0.9031);">MUD001</div><div class="t" style="left:302.60px;top:380.89px;font-size:11px;line-height:11px;color:#1a1a48;transform:scaleX(0.9940);">Judith</div><div class="t" style="left:362.60px;top:380.89px;font-size:11px;line-height:11px;color:#1a1a48;transform:scaleX(0.9472);">Mudzengi</div><div class="t" style="left:429.60px;top:380.89px;font-size:11px;line-height:11px;color:#1a1a48;transform:scaleX(0.9457);">17 May 2017</div><div class="t" style="left:504.60px;top:380.89px;font-size:11px;line-height:11px;color:#1a1a48;transform:scaleX(1.0191);">procuremen...</div><div class="t" style="left:604.20px;top:380.89px;font-size:11px;line-height:11px;color:#1a1a48;transform:scaleX(0.9843);">1 834.96</div><div class="t" style="left:654.60px;top:380.89px;font-size:11px;line-height:11px;color:#1a1a48;transform:scaleX(1.0403);">procu...</div><div class="t" style="left:701.60px;top:380.89px;font-size:11px;line-height:11px;color:#1a1a48;transform:scaleX(0.9023);">Yes</div><div class="t" style="left:801.20px;top:380.89px;font-size:11px;line-height:11px;color:#1a1a48;transform:scaleX(0.9843);">2 091.85</div><div class="t" style="left:851.60px;top:380.89px;font-size:11px;line-height:11px;color:#1a1a48;transform:scaleX(0.9048);">HOP001</div><div class="t" style="left:936.60px;top:380.89px;font-size:11px;line-height:11px;color:#1a1a48;transform:scaleX(0.9647);">Hope Works</div><div class="t" style="left:1019.60px;top:380.89px;font-size:11px;line-height:11px;color:#1a1a48;transform:scaleX(0.9226);">CN0000457</div><div class="t" style="left:1098.60px;top:380.89px;font-size:11px;line-height:11px;color:#1a1a48;transform:scaleX(0.9722);">War</div><svg style="left:22px;top:381px" width="10" height="10"><rect x="0.5" y="0.5" width="8" height="8" fill="none" stroke="#c4c4c8"/><path d="M2.5 4.5 H6.5 M4.5 2.5 V6.5" stroke="#c4c4c8"/></svg><div class="t" style="left:37.70px;top:401.89px;font-size:11px;line-height:11px;color:#1a1a48;transform:scaleX(0.9320);">PR0000364</div><div class="t" style="left:109.60px;top:401.89px;font-size:11px;line-height:11px;color:#1a1a48;transform:scaleX(0.8826);">MAINT</div><div class="t" style="left:166.60px;top:401.89px;font-size:11px;line-height:11px;color:#1a1a48;transform:scaleX(0.7811);">N</div><div class="t" style="left:209.60px;top:401.89px;font-size:11px;line-height:11px;color:#1a1a48;transform:scaleX(0.9031);">MUD001</div><div class="t" style="left:302.60px;top:401.89px;font-size:11px;line-height:11px;color:#1a1a48;transform:scaleX(0.9940);">Judith</div><div class="t" style="left:362.60px;top:401.89px;font-size:11px;line-height:11px;color:#1a1a48;transform:scaleX(0.9472);">Mudzengi</div><div class="t" style="left:429.60px;top:401.89px;font-size:11px;line-height:11px;color:#1a1a48;transform:scaleX(0.9457);">17 May 2017</div><div class="t" style="left:504.60px;top:401.89px;font-size:11px;line-height:11px;color:#1a1a48;transform:scaleX(1.0181);">Standalone ...</div><div class="t" style="left:604.20px;top:401.89px;font-size:11px;line-height:11px;color:#1a1a48;transform:scaleX(0.9843);">1 334.96</div><div class="t" style="left:654.60px;top:401.89px;font-size:11px;line-height:11px;color:#1a1a48;transform:scaleX(1.0426);">Stan...</div><div class="t" style="left:701.60px;top:401.89px;font-size:11px;line-height:11px;color:#1a1a48;transform:scaleX(0.9023);">Yes</div><div class="t" style="left:801.20px;top:401.89px;font-size:11px;line-height:11px;color:#1a1a48;transform:scaleX(0.9843);">1 451.85</div><div class="t" style="left:1098.60px;top:401.89px;font-size:11px;line-height:11px;color:#1a1a48;transform:scaleX(0.9722);">War</div><svg style="left:22px;top:402px" width="10" height="10"><rect x="0.5" y="0.5" width="8" height="8" fill="none" stroke="#202020"/><path d="M2.5 4.5 H6.5 M4.5 2.5 V6.5" stroke="#202020"/></svg><div class="t" style="left:37.70px;top:422.89px;font-size:11px;line-height:11px;color:#1a1a48;transform:scaleX(0.9320);">PR0000366</div><div class="t" style="left:109.60px;top:422.89px;font-size:11px;line-height:11px;color:#1a1a48;transform:scaleX(0.8826);">MAINT</div><div class="t" style="left:166.60px;top:422.89px;font-size:11px;line-height:11px;color:#1a1a48;transform:scaleX(0.7811);">N</div><div class="t" style="left:209.60px;top:422.89px;font-size:11px;line-height:11px;color:#1a1a48;transform:scaleX(0.9314);">MIL001</div><div class="t" style="left:302.60px;top:422.89px;font-size:11px;line-height:11px;color:#1a1a48;transform:scaleX(1.0051);">Abigail</div><div class="t" style="left:362.60px;top:422.89px;font-size:11px;line-height:11px;color:#1a1a48;transform:scaleX(0.9589);">Milne</div><div class="t" style="left:429.60px;top:422.89px;font-size:11px;line-height:11px;color:#1a1a48;transform:scaleX(0.9457);">17 May 2017</div><div class="t" style="left:504.60px;top:422.89px;font-size:11px;line-height:11px;color:#1a1a48;transform:scaleX(1.0700);">v2.1.0.4 st...</div><div class="t" style="left:604.20px;top:422.89px;font-size:11px;line-height:11px;color:#1a1a48;transform:scaleX(0.9843);">5 750.00</div><div class="t" style="left:654.60px;top:422.89px;font-size:11px;line-height:11px;color:#1a1a48;transform:scaleX(1.0949);">v2.1....</div><div class="t" style="left:701.60px;top:422.89px;font-size:11px;line-height:11px;color:#1a1a48;transform:scaleX(0.9023);">Yes</div><div class="t" style="left:801.20px;top:422.89px;font-size:11px;line-height:11px;color:#1a1a48;transform:scaleX(0.9843);">6 555.00</div><div class="t" style="left:1098.60px;top:422.89px;font-size:11px;line-height:11px;color:#1a1a48;transform:scaleX(0.9722);">War</div><svg style="left:22px;top:423px" width="10" height="10"><rect x="0.5" y="0.5" width="8" height="8" fill="none" stroke="#202020"/><path d="M2.5 4.5 H6.5 M4.5 2.5 V6.5" stroke="#202020"/></svg><div class="t" style="left:37.70px;top:443.89px;font-size:11px;line-height:11px;color:#1a1a48;transform:scaleX(0.9320);">PR0000368</div><div class="t" style="left:109.60px;top:443.89px;font-size:11px;line-height:11px;color:#1a1a48;transform:scaleX(0.8826);">MAINT</div><div class="t" style="left:166.60px;top:443.89px;font-size:11px;line-height:11px;color:#1a1a48;transform:scaleX(0.7811);">N</div><div class="t" style="left:209.60px;top:443.89px;font-size:11px;line-height:11px;color:#1a1a48;transform:scaleX(0.9031);">MUD001</div><div class="t" style="left:302.60px;top:443.89px;font-size:11px;line-height:11px;color:#1a1a48;transform:scaleX(0.9940);">Judith</div><div class="t" style="left:362.60px;top:443.89px;font-size:11px;line-height:11px;color:#1a1a48;transform:scaleX(0.9472);">Mudzengi</div><div class="t" style="left:429.60px;top:443.89px;font-size:11px;line-height:11px;color:#1a1a48;transform:scaleX(0.9457);">17 May 2017</div><div class="t" style="left:504.60px;top:443.89px;font-size:11px;line-height:11px;color:#1a1a48;transform:scaleX(1.0527);">stock report...</div><div class="t" style="left:604.20px;top:443.89px;font-size:11px;line-height:11px;color:#1a1a48;transform:scaleX(0.9843);">5 209.26</div><div class="t" style="left:654.60px;top:443.89px;font-size:11px;line-height:11px;color:#1a1a48;transform:scaleX(1.0667);">stock...</div><div class="t" style="left:701.60px;top:443.89px;font-size:11px;line-height:11px;color:#1a1a48;transform:scaleX(0.9023);">Yes</div><div class="t" style="left:801.20px;top:443.89px;font-size:11px;line-height:11px;color:#1a1a48;transform:scaleX(0.9843);">5 938.56</div><div class="t" style="left:1098.60px;top:443.89px;font-size:11px;line-height:11px;color:#1a1a48;transform:scaleX(0.9722);">War</div><svg style="left:22px;top:444px" width="10" height="10"><rect x="0.5" y="0.5" width="8" height="8" fill="none" stroke="#c4c4c8"/><path d="M2.5 4.5 H6.5 M4.5 2.5 V6.5" stroke="#c4c4c8"/></svg><div class="t" style="left:37.70px;top:464.89px;font-size:11px;line-height:11px;color:#1a1a48;transform:scaleX(0.9320);">PR0000369</div><div class="t" style="left:109.60px;top:464.89px;font-size:11px;line-height:11px;color:#1a1a48;transform:scaleX(0.8826);">MAINT</div><div class="t" style="left:166.60px;top:464.89px;font-size:11px;line-height:11px;color:#1a1a48;transform:scaleX(0.7811);">N</div><div class="t" style="left:209.60px;top:464.89px;font-size:11px;line-height:11px;color:#1a1a48;transform:scaleX(0.9031);">MUD001</div><div class="t" style="left:302.60px;top:464.89px;font-size:11px;line-height:11px;color:#1a1a48;transform:scaleX(0.9940);">Judith</div><div class="t" style="left:362.60px;top:464.89px;font-size:11px;line-height:11px;color:#1a1a48;transform:scaleX(0.9472);">Mudzengi</div><div class="t" style="left:429.60px;top:464.89px;font-size:11px;line-height:11px;color:#1a1a48;transform:scaleX(0.9457);">17 May 2017</div><div class="t" style="left:504.60px;top:464.89px;font-size:11px;line-height:11px;color:#1a1a48;transform:scaleX(1.0700);">v2.1.0.4 st...</div><div class="t" style="left:613.20px;top:464.89px;font-size:11px;line-height:11px;color:#1a1a48;transform:scaleX(0.9855);">969.92</div><div class="t" style="left:654.60px;top:464.89px;font-size:11px;line-height:11px;color:#1a1a48;transform:scaleX(1.0949);">v2.1....</div><div class="t" style="left:701.60px;top:464.89px;font-size:11px;line-height:11px;color:#1a1a48;transform:scaleX(0.9023);">Yes</div><div class="t" style="left:801.20px;top:464.89px;font-size:11px;line-height:11px;color:#1a1a48;transform:scaleX(0.9843);">1 105.71</div><div class="t" style="left:1098.60px;top:464.89px;font-size:11px;line-height:11px;color:#1a1a48;transform:scaleX(0.9722);">War</div><svg style="left:22px;top:465px" width="10" height="10"><rect x="0.5" y="0.5" width="8" height="8" fill="none" stroke="#202020"/><path d="M2.5 4.5 H6.5 M4.5 2.5 V6.5" stroke="#202020"/></svg><div class="t" style="left:37.70px;top:485.89px;font-size:11px;line-height:11px;color:#1a1a48;transform:scaleX(0.9320);">PR0000370</div><div class="t" style="left:109.60px;top:485.89px;font-size:11px;line-height:11px;color:#1a1a48;transform:scaleX(0.8826);">MAINT</div><div class="t" style="left:166.60px;top:485.89px;font-size:11px;line-height:11px;color:#1a1a48;transform:scaleX(0.7811);">N</div><div class="t" style="left:209.60px;top:485.89px;font-size:11px;line-height:11px;color:#1a1a48;transform:scaleX(0.9031);">MUD001</div><div class="t" style="left:302.60px;top:485.89px;font-size:11px;line-height:11px;color:#1a1a48;transform:scaleX(0.9940);">Judith</div><div class="t" style="left:362.60px;top:485.89px;font-size:11px;line-height:11px;color:#1a1a48;transform:scaleX(0.9472);">Mudzengi</div><div class="t" style="left:429.60px;top:485.89px;font-size:11px;line-height:11px;color:#1a1a48;transform:scaleX(0.9457);">17 May 2017</div><div class="t" style="left:604.20px;top:485.89px;font-size:11px;line-height:11px;color:#1a1a48;transform:scaleX(0.9843);">4 500.00</div><div class="t" style="left:701.60px;top:485.89px;font-size:11px;line-height:11px;color:#1a1a48;transform:scaleX(0.9023);">Yes</div><div class="t" style="left:801.20px;top:485.89px;font-size:11px;line-height:11px;color:#1a1a48;transform:scaleX(0.9843);">5 130.00</div><div class="t" style="left:1098.60px;top:485.89px;font-size:11px;line-height:11px;color:#1a1a48;transform:scaleX(0.9722);">War</div><svg style="left:22px;top:486px" width="10" height="10"><rect x="0.5" y="0.5" width="8" height="8" fill="none" stroke="#202020"/><path d="M2.5 4.5 H6.5 M4.5 2.5 V6.5" stroke="#202020"/></svg><div class="t" style="left:37.70px;top:506.89px;font-size:11px;line-height:11px;color:#1a1a48;transform:scaleX(0.9320);">PR0000374</div><div class="t" style="left:109.60px;top:506.89px;font-size:11px;line-height:11px;color:#1a1a48;transform:scaleX(0.8826);">MAINT</div><div class="t" style="left:166.60px;top:506.89px;font-size:11px;line-height:11px;color:#1a1a48;transform:scaleX(0.7811);">N</div><div class="t" style="left:209.60px;top:506.89px;font-size:11px;line-height:11px;color:#1a1a48;transform:scaleX(0.9031);">MUD001</div><div class="t" style="left:302.60px;top:506.89px;font-size:11px;line-height:11px;color:#1a1a48;transform:scaleX(0.9940);">Judith</div><div class="t" style="left:362.60px;top:506.89px;font-size:11px;line-height:11px;color:#1a1a48;transform:scaleX(0.9472);">Mudzengi</div><div class="t" style="left:429.60px;top:506.89px;font-size:11px;line-height:11px;color:#1a1a48;transform:scaleX(0.9457);">18 May 2017</div><div class="t" style="left:504.60px;top:506.89px;font-size:11px;line-height:11px;color:#1a1a48;transform:scaleX(1.0324);">call procure...</div><div class="t" style="left:613.20px;top:506.89px;font-size:11px;line-height:11px;color:#1a1a48;transform:scaleX(0.9855);">809.96</div><div class="t" style="left:654.60px;top:506.89px;font-size:11px;line-height:11px;color:#1a1a48;transform:scaleX(1.0667);">call p...</div><div class="t" style="left:701.60px;top:506.89px;font-size:11px;line-height:11px;color:#1a1a48;transform:scaleX(0.9023);">Yes</div><div class="t" style="left:810.20px;top:506.89px;font-size:11px;line-height:11px;color:#1a1a48;transform:scaleX(0.9855);">923.35</div><div class="t" style="left:851.60px;top:506.89px;font-size:11px;line-height:11px;color:#1a1a48;transform:scaleX(0.9048);">HOP001</div><div class="t" style="left:936.60px;top:506.89px;font-size:11px;line-height:11px;color:#1a1a48;transform:scaleX(0.9647);">Hope Works</div><div class="t" style="left:1019.60px;top:506.89px;font-size:11px;line-height:11px;color:#1a1a48;transform:scaleX(0.9226);">CN0000459</div><div class="t" style="left:1098.60px;top:506.89px;font-size:11px;line-height:11px;color:#1a1a48;transform:scaleX(0.9722);">War</div><svg style="left:22px;top:507px" width="10" height="10"><rect x="0.5" y="0.5" width="8" height="8" fill="none" stroke="#202020"/><path d="M2.5 4.5 H6.5 M4.5 2.5 V6.5" stroke="#202020"/></svg><div class="t" style="left:37.70px;top:527.89px;font-size:11px;line-height:11px;color:#1a1a48;transform:scaleX(0.9320);">PR0000377</div><div class="t" style="left:109.60px;top:527.89px;font-size:11px;line-height:11px;color:#1a1a48;transform:scaleX(0.8826);">MAINT</div><div class="t" style="left:166.60px;top:527.89px;font-size:11px;line-height:11px;color:#1a1a48;transform:scaleX(0.7811);">N</div><div class="t" style="left:209.60px;top:527.89px;font-size:11px;line-height:11px;color:#1a1a48;transform:scaleX(0.9031);">MUD001</div><div class="t" style="left:302.60px;top:527.89px;font-size:11px;line-height:11px;color:#1a1a48;transform:scaleX(0.9940);">Judith</div><div class="t" style="left:362.60px;top:527.89px;font-size:11px;line-height:11px;color:#1a1a48;transform:scaleX(0.9472);">Mudzengi</div><div class="t" style="left:429.60px;top:527.89px;font-size:11px;line-height:11px;color:#1a1a48;transform:scaleX(0.9457);">18 May 2017</div><div class="t" style="left:504.60px;top:527.89px;font-size:11px;line-height:11px;color:#1a1a48;transform:scaleX(1.0191);">Project proc...</div><div class="t" style="left:604.20px;top:527.89px;font-size:11px;line-height:11px;color:#1a1a48;transform:scaleX(0.9843);">5 500.00</div><div class="t" style="left:654.60px;top:527.89px;font-size:11px;line-height:11px;color:#1a1a48;transform:scaleX(1.0380);">Proje...</div><div class="t" style="left:701.60px;top:527.89px;font-size:11px;line-height:11px;color:#1a1a48;transform:scaleX(0.9023);">Yes</div><div class="t" style="left:801.20px;top:527.89px;font-size:11px;line-height:11px;color:#1a1a48;transform:scaleX(0.9843);">6 270.00</div><div class="t" style="left:851.60px;top:527.89px;font-size:11px;line-height:11px;color:#1a1a48;transform:scaleX(0.9048);">HOP001</div><div class="t" style="left:936.60px;top:527.89px;font-size:11px;line-height:11px;color:#1a1a48;transform:scaleX(0.9647);">Hope Works</div><div class="t" style="left:1019.60px;top:527.89px;font-size:11px;line-height:11px;color:#1a1a48;transform:scaleX(0.9300);">PRJ0000240</div><div class="t" style="left:1098.60px;top:527.89px;font-size:11px;line-height:11px;color:#1a1a48;transform:scaleX(0.9722);">War</div><svg style="left:22px;top:528px" width="10" height="10"><rect x="0.5" y="0.5" width="8" height="8" fill="none" stroke="#202020"/><path d="M2.5 4.5 H6.5 M4.5 2.5 V6.5" stroke="#202020"/></svg><div class="t" style="left:37.70px;top:548.89px;font-size:11px;line-height:11px;color:#1a1a48;transform:scaleX(0.9320);">PR0000380</div><div class="t" style="left:109.60px;top:548.89px;font-size:11px;line-height:11px;color:#1a1a48;transform:scaleX(0.8826);">MAINT</div><div class="t" style="left:166.60px;top:548.89px;font-size:11px;line-height:11px;color:#1a1a48;transform:scaleX(0.7811);">N</div><div class="t" style="left:209.60px;top:548.89px;font-size:11px;line-height:11px;color:#1a1a48;transform:scaleX(0.9080);">DUT001</div><div class="t" style="left:302.60px;top:548.89px;font-size:11px;line-height:11px;color:#1a1a48;transform:scaleX(0.9270);">Bianca</div><div class="t" style="left:362.60px;top:548.89px;font-size:11px;line-height:11px;color:#1a1a48;transform:scaleX(1.0045);">Du Toit</div><div class="t" style="left:429.60px;top:548.89px;font-size:11px;line-height:11px;color:#1a1a48;transform:scaleX(0.9457);">18 May 2017</div><div class="t" style="left:625.20px;top:548.89px;font-size:11px;line-height:11px;color:#1a1a48;transform:scaleX(0.9889);">0.00</div><div class="t" style="left:701.60px;top:548.89px;font-size:11px;line-height:11px;color:#1a1a48;transform:scaleX(0.8676);">No</div><div class="t" style="left:822.20px;top:548.89px;font-size:11px;line-height:11px;color:#1a1a48;transform:scaleX(0.9889);">0.00</div><div class="t" style="left:1098.60px;top:548.89px;font-size:11px;line-height:11px;color:#1a1a48;transform:scaleX(0.9722);">War</div><svg style="left:22px;top:549px" width="10" height="10"><rect x="0.5" y="0.5" width="8" height="8" fill="none" stroke="#c4c4c8"/><path d="M2.5 4.5 H6.5 M4.5 2.5 V6.5" stroke="#c4c4c8"/></svg><div class="t" style="left:37.70px;top:569.89px;font-size:11px;line-height:11px;color:#1a1a48;transform:scaleX(0.9320);">PR0000381</div><div class="t" style="left:109.60px;top:569.89px;font-size:11px;line-height:11px;color:#1a1a48;transform:scaleX(0.8826);">MAINT</div><div class="t" style="left:166.60px;top:569.89px;font-size:11px;line-height:11px;color:#1a1a48;transform:scaleX(0.7811);">N</div><div class="t" style="left:209.60px;top:569.89px;font-size:11px;line-height:11px;color:#1a1a48;transform:scaleX(0.9080);">DUT001</div><div class="t" style="left:302.60px;top:569.89px;font-size:11px;line-height:11px;color:#1a1a48;transform:scaleX(0.9270);">Bianca</div><div class="t" style="left:362.60px;top:569.89px;font-size:11px;line-height:11px;color:#1a1a48;transform:scaleX(1.0045);">Du Toit</div><div class="t" style="left:429.60px;top:569.89px;font-size:11px;line-height:11px;color:#1a1a48;transform:scaleX(0.9457);">18 May 2017</div><div class="t" style="left:604.20px;top:569.89px;font-size:11px;line-height:11px;color:#1a1a48;transform:scaleX(0.9843);">4 500.00</div><div class="t" style="left:701.60px;top:569.89px;font-size:11px;line-height:11px;color:#1a1a48;transform:scaleX(0.9023);">Yes</div><div class="t" style="left:801.20px;top:569.89px;font-size:11px;line-height:11px;color:#1a1a48;transform:scaleX(0.9843);">5 130.00</div><div class="t" style="left:1098.60px;top:569.89px;font-size:11px;line-height:11px;color:#1a1a48;transform:scaleX(0.9722);">War</div><svg style="left:22px;top:570px" width="10" height="10"><rect x="0.5" y="0.5" width="8" height="8" fill="none" stroke="#c4c4c8"/><path d="M2.5 4.5 H6.5 M4.5 2.5 V6.5" stroke="#c4c4c8"/></svg><div class="t" style="left:37.70px;top:590.89px;font-size:11px;line-height:11px;color:#1a1a48;transform:scaleX(0.9320);">PR0000386</div><div class="t" style="left:109.60px;top:590.89px;font-size:11px;line-height:11px;color:#1a1a48;transform:scaleX(0.8826);">MAINT</div><div class="t" style="left:166.60px;top:590.89px;font-size:11px;line-height:11px;color:#1a1a48;transform:scaleX(0.7811);">N</div><div class="t" style="left:209.60px;top:590.89px;font-size:11px;line-height:11px;color:#1a1a48;transform:scaleX(0.9031);">MUD001</div><div class="t" style="left:302.60px;top:590.89px;font-size:11px;line-height:11px;color:#1a1a48;transform:scaleX(0.9940);">Judith</div><div class="t" style="left:362.60px;top:590.89px;font-size:11px;line-height:11px;color:#1a1a48;transform:scaleX(0.9472);">Mudzengi</div><div class="t" style="left:429.60px;top:590.89px;font-size:11px;line-height:11px;color:#1a1a48;transform:scaleX(0.9457);">18 May 2017</div><div class="t" style="left:613.20px;top:590.89px;font-size:11px;line-height:11px;color:#1a1a48;transform:scaleX(0.9855);">809.96</div><div class="t" style="left:701.60px;top:590.89px;font-size:11px;line-height:11px;color:#1a1a48;transform:scaleX(0.9023);">Yes</div><div class="t" style="left:810.20px;top:590.89px;font-size:11px;line-height:11px;color:#1a1a48;transform:scaleX(0.9855);">923.35</div><div class="t" style="left:1098.60px;top:590.89px;font-size:11px;line-height:11px;color:#1a1a48;transform:scaleX(0.9722);">War</div><svg style="left:22px;top:591px" width="10" height="10"><rect x="0.5" y="0.5" width="8" height="8" fill="none" stroke="#202020"/><path d="M2.5 4.5 H6.5 M4.5 2.5 V6.5" stroke="#202020"/></svg><div class="t" style="left:37.70px;top:611.89px;font-size:11px;line-height:11px;color:#1a1a48;transform:scaleX(0.9320);">PR0000396</div><div class="t" style="left:109.60px;top:611.89px;font-size:11px;line-height:11px;color:#1a1a48;transform:scaleX(0.8826);">MAINT</div><div class="t" style="left:166.60px;top:611.89px;font-size:11px;line-height:11px;color:#1a1a48;transform:scaleX(0.7811);">N</div><div class="t" style="left:209.60px;top:611.89px;font-size:11px;line-height:11px;color:#1a1a48;transform:scaleX(0.9080);">DUT001</div><div class="t" style="left:302.60px;top:611.89px;font-size:11px;line-height:11px;color:#1a1a48;transform:scaleX(0.9270);">Bianca</div><div class="t" style="left:362.60px;top:611.89px;font-size:11px;line-height:11px;color:#1a1a48;transform:scaleX(1.0045);">Du Toit</div><div class="t" style="left:429.60px;top:611.89px;font-size:11px;line-height:11px;color:#1a1a48;transform:scaleX(0.9457);">19 May 2017</div><div class="t" style="left:613.20px;top:611.89px;font-size:11px;line-height:11px;color:#1a1a48;transform:scaleX(0.9855);">490.00</div><div class="t" style="left:701.60px;top:611.89px;font-size:11px;line-height:11px;color:#1a1a48;transform:scaleX(0.9023);">Yes</div><div class="t" style="left:810.20px;top:611.89px;font-size:11px;line-height:11px;color:#1a1a48;transform:scaleX(0.9855);">490.00</div><div class="t" style="left:851.60px;top:611.89px;font-size:11px;line-height:11px;color:#1a1a48;transform:scaleX(0.9048);">HOP001</div><div class="t" style="left:936.60px;top:611.89px;font-size:11px;line-height:11px;color:#1a1a48;transform:scaleX(0.9647);">Hope Works</div><div class="t" style="left:1098.60px;top:611.89px;font-size:11px;line-height:11px;color:#1a1a48;transform:scaleX(0.9722);">War</div><svg style="left:22px;top:612px" width="10" height="10"><rect x="0.5" y="0.5" width="8" height="8" fill="none" stroke="#c4c4c8"/><path d="M2.5 4.5 H6.5 M4.5 2.5 V6.5" stroke="#c4c4c8"/></svg><div class="t" style="left:37.70px;top:632.89px;font-size:11px;line-height:11px;color:#1a1a48;transform:scaleX(0.9320);">PR0000397</div><div class="t" style="left:109.60px;top:632.89px;font-size:11px;line-height:11px;color:#1a1a48;transform:scaleX(0.8826);">MAINT</div><div class="t" style="left:166.60px;top:632.89px;font-size:11px;line-height:11px;color:#1a1a48;transform:scaleX(0.7811);">N</div><div class="t" style="left:209.60px;top:632.89px;font-size:11px;line-height:11px;color:#1a1a48;transform:scaleX(0.9031);">MUD001</div><div class="t" style="left:302.60px;top:632.89px;font-size:11px;line-height:11px;color:#1a1a48;transform:scaleX(0.9940);">Judith</div><div class="t" style="left:362.60px;top:632.89px;font-size:11px;line-height:11px;color:#1a1a48;transform:scaleX(0.9472);">Mudzengi</div><div class="t" style="left:429.60px;top:632.89px;font-size:11px;line-height:11px;color:#1a1a48;transform:scaleX(0.9457);">19 May 2017</div><div class="t" style="left:604.20px;top:632.89px;font-size:11px;line-height:11px;color:#1a1a48;transform:scaleX(0.9843);">1 619.92</div><div class="t" style="left:701.60px;top:632.89px;font-size:11px;line-height:11px;color:#1a1a48;transform:scaleX(0.9023);">Yes</div><div class="t" style="left:801.20px;top:632.89px;font-size:11px;line-height:11px;color:#1a1a48;transform:scaleX(0.9843);">1 846.71</div><div class="t" style="left:1098.60px;top:632.89px;font-size:11px;line-height:11px;color:#1a1a48;transform:scaleX(0.9722);">War</div><svg style="left:22px;top:633px" width="10" height="10"><rect x="0.5" y="0.5" width="8" height="8" fill="none" stroke="#c4c4c8"/><path d="M2.5 4.5 H6.5 M4.5 2.5 V6.5" stroke="#c4c4c8"/></svg><div class="t" style="left:37.70px;top:653.89px;font-size:11px;line-height:11px;color:#1a1a48;transform:scaleX(0.9320);">PR0000398</div><div class="t" style="left:109.60px;top:653.89px;font-size:11px;line-height:11px;color:#1a1a48;transform:scaleX(0.8826);">MAINT</div><div class="t" style="left:166.60px;top:653.89px;font-size:11px;line-height:11px;color:#1a1a48;transform:scaleX(0.7811);">N</div><div class="t" style="left:209.60px;top:653.89px;font-size:11px;line-height:11px;color:#1a1a48;transform:scaleX(0.9031);">MUD001</div><div class="t" style="left:302.60px;top:653.89px;font-size:11px;line-height:11px;color:#1a1a48;transform:scaleX(0.9940);">Judith</div><div class="t" style="left:362.60px;top:653.89px;font-size:11px;line-height:11px;color:#1a1a48;transform:scaleX(0.9472);">Mudzengi</div><div class="t" style="left:429.60px;top:653.89px;font-size:11px;line-height:11px;color:#1a1a48;transform:scaleX(0.9457);">19 May 2017</div><div class="t" style="left:604.20px;top:653.89px;font-size:11px;line-height:11px;color:#1a1a48;transform:scaleX(0.9843);">1 419.92</div><div class="t" style="left:701.60px;top:653.89px;font-size:11px;line-height:11px;color:#1a1a48;transform:scaleX(0.9023);">Yes</div><div class="t" style="left:801.20px;top:653.89px;font-size:11px;line-height:11px;color:#1a1a48;transform:scaleX(0.9843);">1 618.71</div><div class="t" style="left:1098.60px;top:653.89px;font-size:11px;line-height:11px;color:#1a1a48;transform:scaleX(0.9722);">War</div><svg style="left:22px;top:654px" width="10" height="10"><rect x="0.5" y="0.5" width="8" height="8" fill="none" stroke="#c4c4c8"/><path d="M2.5 4.5 H6.5 M4.5 2.5 V6.5" stroke="#c4c4c8"/></svg><div class="t" style="left:37.70px;top:674.89px;font-size:11px;line-height:11px;color:#1a1a48;transform:scaleX(0.9320);">PR0000400</div><div class="t" style="left:109.60px;top:674.89px;font-size:11px;line-height:11px;color:#1a1a48;transform:scaleX(0.8826);">MAINT</div><div class="t" style="left:166.60px;top:674.89px;font-size:11px;line-height:11px;color:#1a1a48;transform:scaleX(0.7811);">N</div><div class="t" style="left:209.60px;top:674.89px;font-size:11px;line-height:11px;color:#1a1a48;transform:scaleX(0.9031);">MUD001</div><div class="t" style="left:302.60px;top:674.89px;font-size:11px;line-height:11px;color:#1a1a48;transform:scaleX(0.9940);">Judith</div><div class="t" style="left:362.60px;top:674.89px;font-size:11px;line-height:11px;color:#1a1a48;transform:scaleX(0.9472);">Mudzengi</div><div class="t" style="left:429.60px;top:674.89px;font-size:11px;line-height:11px;color:#1a1a48;transform:scaleX(0.9457);">19 May 2017</div><div class="t" style="left:613.20px;top:674.89px;font-size:11px;line-height:11px;color:#1a1a48;transform:scaleX(0.9855);">200.00</div><div class="t" style="left:701.60px;top:674.89px;font-size:11px;line-height:11px;color:#1a1a48;transform:scaleX(0.9023);">Yes</div><div class="t" style="left:810.20px;top:674.89px;font-size:11px;line-height:11px;color:#1a1a48;transform:scaleX(0.9855);">228.00</div><div class="t" style="left:1098.60px;top:674.89px;font-size:11px;line-height:11px;color:#1a1a48;transform:scaleX(0.9722);">War</div><svg style="left:22px;top:675px" width="10" height="10"><rect x="0.5" y="0.5" width="8" height="8" fill="none" stroke="#c4c4c8"/><path d="M2.5 4.5 H6.5 M4.5 2.5 V6.5" stroke="#c4c4c8"/></svg><div class="t" style="left:37.70px;top:695.89px;font-size:11px;line-height:11px;color:#1a1a48;transform:scaleX(0.9320);">PR0000404</div><div class="t" style="left:109.60px;top:695.89px;font-size:11px;line-height:11px;color:#1a1a48;transform:scaleX(0.8826);">MAINT</div><div class="t" style="left:166.60px;top:695.89px;font-size:11px;line-height:11px;color:#1a1a48;transform:scaleX(0.7811);">N</div><div class="t" style="left:209.60px;top:695.89px;font-size:11px;line-height:11px;color:#1a1a48;transform:scaleX(0.9031);">MUD001</div><div class="t" style="left:302.60px;top:695.89px;font-size:11px;line-height:11px;color:#1a1a48;transform:scaleX(0.9940);">Judith</div><div class="t" style="left:362.60px;top:695.89px;font-size:11px;line-height:11px;color:#1a1a48;transform:scaleX(0.9472);">Mudzengi</div><div class="t" style="left:429.60px;top:695.89px;font-size:11px;line-height:11px;color:#1a1a48;transform:scaleX(0.9457);">19 May 2017</div><div class="t" style="left:604.20px;top:695.89px;font-size:11px;line-height:11px;color:#1a1a48;transform:scaleX(0.9843);">4 500.00</div><div class="t" style="left:701.60px;top:695.89px;font-size:11px;line-height:11px;color:#1a1a48;transform:scaleX(0.9023);">Yes</div><div class="t" style="left:801.20px;top:695.89px;font-size:11px;line-height:11px;color:#1a1a48;transform:scaleX(0.9843);">5 130.00</div><div class="t" style="left:1098.60px;top:695.89px;font-size:11px;line-height:11px;color:#1a1a48;transform:scaleX(0.9722);">War</div><svg style="left:22px;top:696px" width="10" height="10"><rect x="0.5" y="0.5" width="8" height="8" fill="none" stroke="#c4c4c8"/><path d="M2.5 4.5 H6.5 M4.5 2.5 V6.5" stroke="#c4c4c8"/></svg><div class="t" style="left:37.70px;top:716.89px;font-size:11px;line-height:11px;color:#1a1a48;transform:scaleX(0.9320);">PR0000405</div><div class="t" style="left:109.60px;top:716.89px;font-size:11px;line-height:11px;color:#1a1a48;transform:scaleX(0.8826);">MAINT</div><div class="t" style="left:166.60px;top:716.89px;font-size:11px;line-height:11px;color:#1a1a48;transform:scaleX(0.7811);">N</div><div class="t" style="left:209.60px;top:716.89px;font-size:11px;line-height:11px;color:#1a1a48;transform:scaleX(0.9031);">MUD001</div><div class="t" style="left:302.60px;top:716.89px;font-size:11px;line-height:11px;color:#1a1a48;transform:scaleX(0.9940);">Judith</div><div class="t" style="left:362.60px;top:716.89px;font-size:11px;line-height:11px;color:#1a1a48;transform:scaleX(0.9472);">Mudzengi</div><div class="t" style="left:429.60px;top:716.89px;font-size:11px;line-height:11px;color:#1a1a48;transform:scaleX(0.9457);">19 May 2017</div><div class="t" style="left:504.60px;top:716.89px;font-size:11px;line-height:11px;color:#1a1a48;transform:scaleX(1.0243);">retest</div><div class="t" style="left:604.20px;top:716.89px;font-size:11px;line-height:11px;color:#1a1a48;transform:scaleX(0.9843);">4 500.00</div><div class="t" style="left:654.60px;top:716.89px;font-size:11px;line-height:11px;color:#1a1a48;transform:scaleX(1.0243);">retest</div><div class="t" style="left:701.60px;top:716.89px;font-size:11px;line-height:11px;color:#1a1a48;transform:scaleX(0.9023);">Yes</div><div class="t" style="left:801.20px;top:716.89px;font-size:11px;line-height:11px;color:#1a1a48;transform:scaleX(0.9843);">5 130.00</div><div class="t" style="left:1098.60px;top:716.89px;font-size:11px;line-height:11px;color:#1a1a48;transform:scaleX(0.9722);">War</div><svg style="left:22px;top:717px" width="10" height="10"><rect x="0.5" y="0.5" width="8" height="8" fill="none" stroke="#c4c4c8"/><path d="M2.5 4.5 H6.5 M4.5 2.5 V6.5" stroke="#c4c4c8"/></svg><div class="t" style="left:37.70px;top:737.89px;font-size:11px;line-height:11px;color:#1a1a48;transform:scaleX(0.9320);">PR0000407</div><div class="t" style="left:109.60px;top:737.89px;font-size:11px;line-height:11px;color:#1a1a48;transform:scaleX(0.8826);">MAINT</div><div class="t" style="left:166.60px;top:737.89px;font-size:11px;line-height:11px;color:#1a1a48;transform:scaleX(0.7811);">N</div><div class="t" style="left:209.60px;top:737.89px;font-size:11px;line-height:11px;color:#1a1a48;transform:scaleX(0.9031);">MUD001</div><div class="t" style="left:302.60px;top:737.89px;font-size:11px;line-height:11px;color:#1a1a48;transform:scaleX(0.9940);">Judith</div><div class="t" style="left:362.60px;top:737.89px;font-size:11px;line-height:11px;color:#1a1a48;transform:scaleX(0.9472);">Mudzengi</div><div class="t" style="left:429.60px;top:737.89px;font-size:11px;line-height:11px;color:#1a1a48;transform:scaleX(0.9457);">19 May 2017</div><div class="t" style="left:613.20px;top:737.89px;font-size:11px;line-height:11px;color:#1a1a48;transform:scaleX(0.9855);">650.00</div><div class="t" style="left:701.60px;top:737.89px;font-size:11px;line-height:11px;color:#1a1a48;transform:scaleX(0.9023);">Yes</div><div class="t" style="left:810.20px;top:737.89px;font-size:11px;line-height:11px;color:#1a1a48;transform:scaleX(0.9855);">713.00</div><div class="t" style="left:1098.60px;top:737.89px;font-size:11px;line-height:11px;color:#1a1a48;transform:scaleX(0.9722);">War</div><svg style="left:22px;top:738px" width="10" height="10"><rect x="0.5" y="0.5" width="8" height="8" fill="none" stroke="#c4c4c8"/><path d="M2.5 4.5 H6.5 M4.5 2.5 V6.5" stroke="#c4c4c8"/></svg><div class="t" style="left:37.70px;top:758.89px;font-size:11px;line-height:11px;color:#1a1a48;transform:scaleX(0.9320);">PR0000409</div><div class="t" style="left:109.60px;top:758.89px;font-size:11px;line-height:11px;color:#1a1a48;transform:scaleX(0.8826);">MAINT</div><div class="t" style="left:166.60px;top:758.89px;font-size:11px;line-height:11px;color:#1a1a48;transform:scaleX(0.7811);">N</div><div class="t" style="left:209.60px;top:758.89px;font-size:11px;line-height:11px;color:#1a1a48;transform:scaleX(0.9031);">MUD001</div><div class="t" style="left:302.60px;top:758.89px;font-size:11px;line-height:11px;color:#1a1a48;transform:scaleX(0.9940);">Judith</div><div class="t" style="left:362.60px;top:758.89px;font-size:11px;line-height:11px;color:#1a1a48;transform:scaleX(0.9472);">Mudzengi</div><div class="t" style="left:429.60px;top:758.89px;font-size:11px;line-height:11px;color:#1a1a48;transform:scaleX(0.9457);">22 May 2017</div><div class="t" style="left:604.20px;top:758.89px;font-size:11px;line-height:11px;color:#1a1a48;transform:scaleX(0.9843);">9 000.00</div><div class="t" style="left:701.60px;top:758.89px;font-size:11px;line-height:11px;color:#1a1a48;transform:scaleX(0.9023);">Yes</div><div class="t" style="left:795.20px;top:758.89px;font-size:11px;line-height:11px;color:#1a1a48;transform:scaleX(0.9837);">10 260.00</div><div class="t" style="left:1098.60px;top:758.89px;font-size:11px;line-height:11px;color:#1a1a48;transform:scaleX(0.9722);">War</div><svg style="left:22px;top:759px" width="10" height="10"><rect x="0.5" y="0.5" width="8" height="8" fill="none" stroke="#c4c4c8"/><path d="M2.5 4.5 H6.5 M4.5 2.5 V6.5" stroke="#c4c4c8"/></svg></div><div class="a" style="left:16px;top:227px;width:21px;height:23px;background:transparent;border:3px solid #000"></div><svg style="left:9px;top:234px" width="6" height="10"><path d="M1 0.5 L5 4.5 L1 8.5 Z" fill="#1e1e2e"/></svg><div class="a" style="left:1119px;top:205px;width:18px;height:575px;background:#f4f4f6;"></div><svg style="left:1119px;top:204px" width="18" height="576"><path d="M5 11.5 H12 L8.5 7.5 Z" fill="#8c8c94"/><path d="M5 564.5 H12 L8.5 568.5 Z" fill="#8c8c94"/><rect x="5.5" y="18.5" width="6.5" height="259" rx="3.2" fill="#dedee2" stroke="#a8a8b0"/></svg><div class="a" style="left:2px;top:780px;width:1135px;height:16px;background:#f4f4f6;"></div><svg style="left:2px;top:780px" width="1135" height="16"><path d="M9 7.5 L13 4 V11 Z" fill="#8c8c94"/><path d="M1112 7.5 L1108 4 V11 Z" fill="#8c8c94"/><rect x="19.5" y="4.5" width="1017" height="6.5" rx="3.2" fill="#dedee2" stroke="#a8a8b0"/></svg><div class="a" style="left:2px;top:151px;width:1px;height:645px;background:#b8b8bc;"></div><div class="a" style="left:2px;top:795px;width:1135px;height:1px;background:#a8a8ae;"></div><div class="a" style="left:2px;top:796px;width:1135px;height:28px;background:linear-gradient(#e8e8ea,#d8d8dc);"></div><div class="t" style="left:10.50px;top:806.19px;font-size:11px;line-height:11px;color:#1e1e3c;transform:scaleX(0.9581);">Open Windows</div><svg style="left:85px;top:808px" width="8" height="6"><path d="M0.5 0.5 H7 L3.75 4 Z" fill="#222"/></svg><div class="a" style="left:998px;top:799px;width:1px;height:20px;background:#b8b8bc;"></div><div class="a" style="left:1009px;top:800px;width:99px;height:21px;background:#fff;border:1px solid #d4d4d8"></div><div class="t" style="left:1013.00px;top:806.19px;font-size:11px;line-height:11px;color:#1e1e3c;transform:scaleX(0.9525);">21 Sep 2018</div><svg style="left:1094px;top:802px" width="12" height="18"><path d="M2 6 H9 L5.5 2.5 Z" fill="#c8c8cc"/><path d="M2 12 H9 L5.5 15.5 Z" fill="#c8c8cc"/></svg><svg style="left:1120px;top:806px" width="16" height="17"><path d="M3.5 13.5 L13 4 M8 13.8 L13 8.8" stroke="#7a7a80" stroke-width="1.1"/></svg></body></html>
